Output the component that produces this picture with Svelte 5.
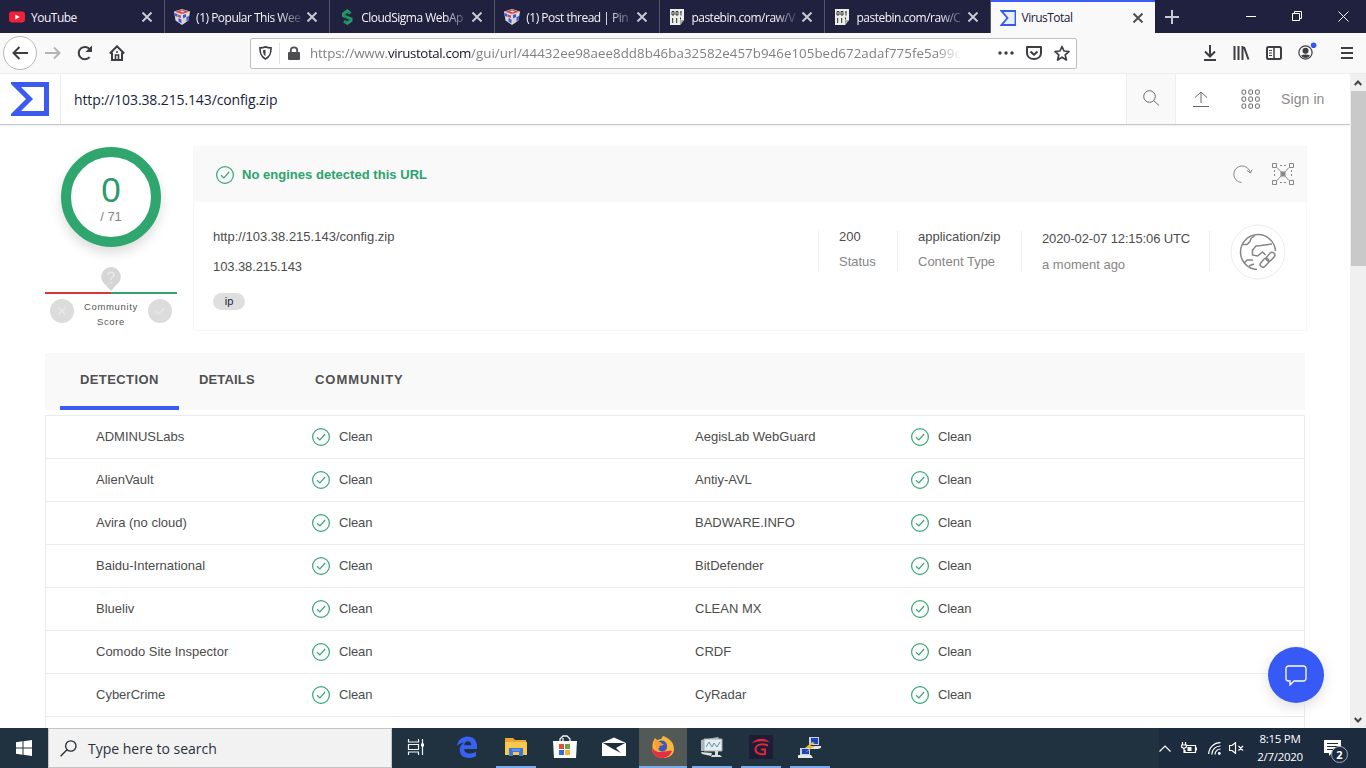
<script>
    const tabs = [
        { icon: "youtube", title: "YouTube" },
        { icon: "cube", title: "(1) Popular This Wee" },
        { icon: "sigma", title: "CloudSigma WebAp" },
        { icon: "cube", title: "(1) Post thread | Pin" },
        { icon: "paste", title: "pastebin.com/raw/V" },
        { icon: "paste", title: "pastebin.com/raw/C" },
        { icon: "vt", title: "VirusTotal", active: true },
    ];

    const engines = [
        ["ADMINUSLabs", "AegisLab WebGuard"],
        ["AlienVault", "Antiy-AVL"],
        ["Avira (no cloud)", "BADWARE.INFO"],
        ["Baidu-International", "BitDefender"],
        ["Blueliv", "CLEAN MX"],
        ["Comodo Site Inspector", "CRDF"],
        ["CyberCrime", "CyRadar"],
    ];

    const apps = [
        { name: "taskview" },
        { name: "edge" },
        { name: "explorer", open: true },
        { name: "store" },
        { name: "mail" },
        { name: "firefox", open: true, focused: true },
        { name: "monitor", open: true },
        { name: "garena", open: true },
        { name: "putty", open: true },
    ];
</script>

{#snippet check()}
    <svg class="check" width="18" height="18" viewBox="0 0 18 18">
        <circle cx="9" cy="9" r="8.4" />
        <path d="M5 9.2l2.9 2.8 5.2-6" />
    </svg>
{/snippet}

{#snippet favicon(name)}
    <svg class="favicon" width="16" height="16" viewBox="0 0 16 16">
        {#if name === "youtube"}
            <rect y="2.5" width="16" height="11" rx="3" fill="#f0223a" />
            <path d="M6.3 5.5v5l4.4-2.5z" fill="#fff" />
        {:else if name === "cube"}
            <path d="M0 2.5L8 0l8 2.5-1.5 9L8 16l-6.5-4.5z" fill="#dcd9dc" />
            <path d="M1 2.7L8 .5l7 2.2L8 5z" fill="#d64447" />
            <path d="M6 2.5l2-1 2.5 1-2 1z" fill="#f5eaea" />
            <path d="M.5 4l3 1v3l-2.500-1zM4.500 9l3 1.500v4l-3-2z" fill="#3c5fd0" />
            <path d="M9 6l3-1v3l-3 1.500zM12.500 8l2.500-1-.5 4-2 1.500z" fill="#3157d5" />
            <path d="M4 5.5l3 1v2.500l-3-1z" fill="#cf4a50" />
            <path d="M9 11l3-1.500v2.500l-3 2z" fill="#e6cbb6" />
        {:else if name === "sigma"}
            <path d="M11.500 4.500L8.300 2 4.500 4.800v2l7.500 3v2L8.300 14.300 5 12" fill="none" stroke="#249765" stroke-width="3" />
            <path d="M5 6l6-3M5.500 8l6 3M6 13l5-2.500" stroke="#1c6f54" stroke-width=".8" />
        {:else if name === "paste"}
            <path d="M1 0h14v11l-4 5H1z" fill="#eceeea" />
            <path d="M15 11h-4v5z" fill="#a8aaa7" />
            <path d="M3 2.500h2v3.500H3zM7 2.500h2v3.500H7zM12 2v4.500M11.300 3h1M3.700 9v5M3 10h1M7.700 9v5M7 10h1M11.500 8.500v2" fill="none" stroke="#333" />
        {:else}
            <path d="M1.500 1h14v14h-14l6-7z" fill="#e7efff" stroke="#3459ed" stroke-width="1.800" />
        {/if}
    </svg>
{/snippet}

{#snippet appIcon(name)}
    {#if name === "taskview"}
        <svg class="taskview" width="18" height="18" viewBox="0 0 18 18" fill="none" stroke="#f2f5f7" stroke-width="1.200">
            <path d="M1.500 1v3h10V1M1.500 17v-3h10v3M1.500 6.500h10v5h-10zM15.500 1v16" />
            <path d="M14 5.500h3v3h-3z" fill="#fff" stroke="none" />
        </svg>
    {:else if name === "edge"}
        <svg width="22" height="22" viewBox="0 0 22 22">
            <path d="M1 10C2 4 6 .5 11.500.5c6 0 9.500 4 9.500 10V13H8c.3 3 2.600 4.500 6 4.500 2.300 0 4.300-.6 6-1.700v4.400C18 21.300 15.500 22 12.700 22 7 22 3.700 18.700 3.700 13.800c0-3 1.500-5.500 4.300-7C5 7 2.700 8.200 1 10zM8.200 9.200h7.100c0-2.500-1.200-4-3.500-4-2 0-3.300 1.500-3.600 4z" fill="#3a62f2" />
        </svg>
    {:else if name === "explorer"}
        <svg width="22" height="20" viewBox="0 0 22 20">
            <path d="M0 1h8l2 2h11v15H0z" fill="#eba837" />
            <path d="M0 5h22v13H0z" fill="#fbc84e" />
            <path d="M4 19v-8h14v8h-4v-4H8v4z" fill="#3c76d8" />
            <path d="M7 13h8" stroke="#82b1f5" />
        </svg>
    {:else if name === "store"}
        <svg width="24" height="24" viewBox="0 0 24 24">
            <path d="M7 8V4l3-3h4l3 3v4M10 7V3" fill="none" stroke="#f5f7f8" stroke-width="1.300" />
            <path d="M0 6h24l-1 17H1z" fill="#fafafa" />
            <path d="M6 9h5v5H6z" fill="#e44c35" />
            <path d="M12 9h5v5h-5z" fill="#6aa644" />
            <path d="M6 15h5v5H6z" fill="#306ce0" />
            <path d="M12 15h5v5h-5z" fill="#f1b331" />
        </svg>
    {:else if name === "mail"}
        <svg width="24" height="20" viewBox="0 0 24 20">
            <path d="M0 6L12 .5 24 6v13H0z" fill="#fff" />
            <path d="M1 6h22L14 11l5 5-8-4z" fill="#1e2e3c" />
        </svg>
    {:else if name === "firefox"}
        <svg width="24" height="24" viewBox="0 0 24 24">
            <path d="M2 7l2-4 2 2 4-1 2-3c6 2 11 6 11 13 0 6-5 9-11 9S1 19 1 13z" fill="#f7b638" />
            <path d="M1 9c0 6 4 8 8 8 5 0 8-2 12-1-2 5-6 7-10 7C5 23 0 18 1 9z" fill="#e72f43" />
            <path d="M8 6c5-2 9 2 8 7-1 4-6 5-9 1l2-2-3-2z" fill="#3c58bd" />
            <path d="M4 5l5 2 4 3-5 1-2 3-2-4z" fill="#fa9c30" />
        </svg>
    {:else if name === "monitor"}
        <svg width="24" height="22" viewBox="0 0 24 22">
            <path d="M1 4l17-3 2 3v11H1z" fill="#adb6bb" />
            <path d="M4 3h18v12H4z" fill="#e8edf0" stroke="#a5afb4" />
            <path d="M6 11l3-5 3 5 2-4 3 4 3-5" fill="none" stroke="#5693b8" />
            <path d="M15 15v4h-3l-1 2h11l-2-2h-2v-4" fill="#d8dddf" />
            <path d="M1 16l11 1-1 3-9-2z" fill="#dce1e3" />
        </svg>
    {:else if name === "garena"}
        <svg width="24" height="24" viewBox="0 0 24 24">
            <path d="M0 0h24v24H0z" fill="#1d1d36" />
            <path d="M2.500 8.500C7 2.500 16 2 21 7.500 14 5.500 8 6 2.500 8.500z" fill="#db2b3a" />
            <path d="M19 10.500c-6-2.500-12-1-12.500 3.500-.3 4 4.500 6 9.500 5v-4.500h-4" fill="none" stroke="#db2b3a" stroke-width="2" />
        </svg>
    {:else}
        <svg width="24" height="24" viewBox="0 0 24 24">
            <path d="M11 2h10v8H11zM2 13h10v7H2z" fill="#c7d1df" />
            <path d="M13 3h7v6h-7zM4 14h7v5H4z" fill="#1e42b8" />
            <path d="M10 11h13v2l-3 1H10zM0 20h13l2 3H0z" fill="#e3e5e7" />
            <path d="M14 7l-7 6h5l-5 5 10-7h-5l5-3z" fill="#e1b84a" />
        </svg>
    {/if}
{/snippet}

<div class="screen">
    <div class="tabstrip">
        {#each tabs as tab}
            <div class="tab" class:active={tab.active}>
                {@render favicon(tab.icon)}
                <span class="tab-title" class:fade={!tab.active && tab.title.length > 10}>{tab.title}</span>
                <svg class="close" width="10" height="10" viewBox="0 0 10 10"><path d="M.5.5l9 9M9.500.5l-9 9" /></svg>
            </div>
        {/each}
        <svg class="new-tab" width="14" height="14" viewBox="0 0 14 14"><path d="M7 0v14M0 7h14" /></svg>
        <div class="window-buttons">
            <svg width="10" height="10" viewBox="0 0 10 10"><path d="M0 5.500h10" /></svg>
            <svg width="10" height="10" viewBox="0 0 10 10"><path d="M.5 2.500h7v7h-7zM2.500 2.500v-2h7v7h-2" /></svg>
            <svg width="11" height="11" viewBox="0 0 11 11"><path d="M.5.5l10 10M10.500.5l-10 10" /></svg>
        </div>
    </div>

    <div class="toolbar">
        <div class="back">
            <svg width="16" height="14" viewBox="0 0 16 14"><path d="M16 7H1.500M7.500 1l-6 6 6 6" /></svg>
        </div>
        <svg class="nav forward" width="16" height="14" viewBox="0 0 16 14"><path d="M0 7h14.500M9 1.500L14.500 7 9 12.500" /></svg>
        <svg class="nav reload" width="16" height="16" viewBox="0 0 16 16"><path d="M12.600 12.200A6.200 6.200 0 1 1 13 4.500" /><path d="M15 .5V7H8.500z" fill="#3d3d42" stroke="none" /></svg>
        <svg class="nav home" width="16" height="16" viewBox="0 0 16 16"><path d="M.8 8.500L8 1.300l7.200 7.200M3 7.500V15h10V7.500" /><path d="M6.500 15v-5h3v5M7 7h2" stroke-width="1.600" /></svg>
        <div class="urlbar">
            <svg class="shield" width="13" height="14" viewBox="0 0 13 14"><path d="M1 1.800c2.200 0 4-.3 5.500-.9 1.500.6 3.300.9 5.500.9 0 5.500-.8 9-5.500 11.200C1.800 10.800 1 7.300 1 1.800z" fill="none" stroke="#3f3f43" stroke-width="1.700" /><path d="M6.500 3.700v6.500c-1.800-1-2.500-3-2.500-6z" fill="#3f3f43" /></svg>
            <span class="identity-line"></span>
            <svg class="lock" width="12" height="14" viewBox="0 0 12 14"><path d="M2.800 7V4.500a3.200 3.200 0 0 1 6.400 0V7" fill="none" stroke="#4e4e50" stroke-width="1.800" /><rect y="6" width="12" height="8" rx="1" fill="#4e4e50" /></svg>
            <span class="url">https://www.<b>virustotal.com</b><i>/gui/url/44432ee98aee8dd8b46ba32582e457b946e105bed672adaf775fe5a99c</i></span>
            <svg class="page-actions" width="72" height="16" viewBox="0 0 72 16">
                <g fill="#3d3d42"><circle cx="2" cy="8" r="1.700" /><circle cx="8" cy="8" r="1.700" /><circle cx="14" cy="8" r="1.700" /></g>
                <path d="M29 2h14v6c0 3.500-3 6-7 6s-7-2.500-7-6zM32.500 6.500L36 9.800l3.500-3.300" fill="none" stroke="#3d3d42" stroke-width="2" stroke-linejoin="round" />
                <path d="M64 1.500l2 4.500 5 .5-3.800 3.300L68.400 15 64 12.200 59.600 15l1.200-5.200L57 6.500l5-.5z" fill="none" stroke="#3d3d42" stroke-width="1.700" stroke-linejoin="round" />
            </svg>
        </div>
        <div class="tools">
            <svg width="14" height="16" viewBox="0 0 14 16"><path d="M7 0v11M2 6.500l5 5 5-5M1 15h12" /></svg>
            <svg width="17" height="16" viewBox="0 0 17 16"><path d="M1.500 1v14M5.500 1v14M9.500 1v14M11 2l4.500 12.500" /></svg>
            <svg width="16" height="14" viewBox="0 0 16 14"><rect x="1" y="1" width="14" height="12" rx="1.500" /><path d="M8 1v12" stroke-width="1.500" /><path d="M3 4.500h3M3 7h3M3 9.500h3" stroke-width="1" /></svg>
            <svg class="account" width="19" height="19" viewBox="0 0 19 19"><circle cx="7.500" cy="10.500" r="6.600" stroke-width="1.200" /><circle cx="7.500" cy="8.700" r="3" fill="#3d3d42" stroke="none" /><path d="M3 13.500c2.500-1.500 6.500-1.500 9 0-2 3.300-7 3.300-9 0z" fill="#3d3d42" stroke="none" /><circle cx="15.600" cy="3.200" r="2.800" fill="#3456f3" stroke="none" /></svg>
            <svg class="menu" width="12" height="12" viewBox="0 0 12 12"><path d="M0 1h12M0 6h12M0 11h12" /></svg>
        </div>
    </div>

    <div class="viewport">
        <div class="page">
            <header>
                <div class="logo">
                    <svg width="38" height="34" viewBox="0 0 38 34"><path d="M4 2.500h31.500v29H4L18.500 17z" fill="none" stroke="#3a5af0" stroke-width="5" /></svg>
                </div>
                <div class="query">http://103.38.215.143/config.zip</div>
                <div class="search">
                    <svg width="16" height="16" viewBox="0 0 16 16"><circle cx="6.500" cy="6.500" r="5.800" /><path d="M10.800 10.800L16 15.500" /></svg>
                </div>
                <div class="user">
                    <svg width="16" height="16" viewBox="0 0 16 16"><path d="M8 12V1M2 6.500L8 1l6 5.500M0 15.500h16" /></svg>
                    <svg class="grid" width="19" height="20" viewBox="0 0 19 20">
                        {#each [0, 1, 2] as r}
                            {#each [0, 1, 2] as c}
                                <rect x={1 + c * 6.8} y={1 + r * 7} width="3.700" height="4.200" rx="1" />
                            {/each}
                        {/each}
                    </svg>
                    <span>Sign in</span>
                </div>
            </header>

            <main>
                <section class="summary">
                    <aside>
                        <div class="ring"><strong>0</strong><span>/ 71</span></div>
                        <svg class="pin" width="20" height="24" viewBox="0 0 20 24"><path d="M10 0a9.800 9.800 0 0 1 5 18.200L10 24l-5-5.800A9.800 9.800 0 0 1 10 0z" fill="#d6d6d6" /><path d="M7 8c0-4 6-3.500 6-.5 0 2.500-3 2.500-3 4.500v1M10 15v1.500" fill="none" stroke="#e9e9e9" stroke-width="1.500" /></svg>
                        <div class="scale"></div>
                        <div class="community">
                            <svg width="24" height="24" viewBox="0 0 24 24"><circle cx="12" cy="12" r="12" fill="#dcdcdc" /><path d="M8.500 8.500l7 7M15.500 8.500l-7 7" stroke="#e8e8e8" stroke-width="1.500" /></svg>
                            <span>Community<br />Score</span>
                            <svg width="24" height="24" viewBox="0 0 24 24"><circle cx="12" cy="12" r="12" fill="#dcdcdc" /><path d="M7.500 12l3 3 6-6" fill="none" stroke="#e8e8e8" stroke-width="1.500" /></svg>
                        </div>
                    </aside>
                    <article>
                        <div class="verdict">
                            {@render check()}
                            <strong>No engines detected this URL</strong>
                            <svg class="rescan" width="20" height="20" viewBox="0 0 20 20"><path d="M8.500 18.500A8.300 8.300 0 1 1 17.300 9M14 6.500l3.500 2.500 1.500-3.500" /></svg>
                            <svg class="graph" width="22" height="24" viewBox="0 0 22 24"><path d="M.5 1.500h4v4h-4zM17.500 1.500h4v4h-4zM.5 18.500h4v4h-4zM17.500 18.500h4v4h-4zM5 5.500l12 13M17 5.500l-12 13" /><path d="M8 3.500h6M8 20.500h6M2.500 8v8M19.500 8v8" stroke-dasharray="2 2" /><rect x="8.500" y="9.500" width="5" height="5" fill="#888" stroke="none" /></svg>
                        </div>
                        <div class="facts">
                            <div class="target">
                                <p>http://103.38.215.143/config.zip</p>
                                <p class="address">103.38.215.143</p>
                                <span class="tag">ip</span>
                            </div>
                            <div class="fact status">200<small>Status</small></div>
                            <div class="fact type">application/zip<small>Content Type</small></div>
                            <div class="fact date"><span>2020-02-07 12:15:06 UTC</span><small>a moment ago</small></div>
                            <div class="fact globe">
                                <svg width="56" height="56" viewBox="0 0 56 56" fill="none" stroke="#858585" stroke-width="1.500">
                                    <circle cx="28" cy="28" r="27" stroke="#ececec" stroke-width="1" />
                                    <path d="M27 45.500A17.500 17.500 0 1 1 45.500 27" />
                                    <path d="M13 20.500h4l3-3 1-3 4-3M42 20l-11 1.500-5 .5-3.500 4v5l5 1 5-4 3 3M14 39.500l3-3.500h6M19 42l5-2" />
                                    <rect x="35.500" y="30.500" width="10" height="5.500" rx="2.700" transform="rotate(-48 40 33)" />
                                    <rect x="29.500" y="36.500" width="10" height="5.500" rx="2.700" transform="rotate(-48 34 39)" />
                                </svg>
                            </div>
                        </div>
                    </article>
                </section>

                <nav>
                    <span class="selected">DETECTION</span>
                    <span class="details">DETAILS</span>
                    <span class="comm">COMMUNITY</span>
                </nav>

                <div class="results">
                    {#each engines as row}
                        <div class="row">
                            {#each row as engine}
                                <div class="engine">
                                    <span>{engine}</span>
                                    {@render check()}
                                    <em>Clean</em>
                                </div>
                            {/each}
                        </div>
                    {/each}
                </div>
            </main>
        </div>
        <div class="scrollbar">
            <svg width="8" height="6" viewBox="0 0 8 6"><path d="M.7 5L4 1.500 7.300 5" /></svg>
            <div class="thumb"></div>
            <svg class="down" width="8" height="6" viewBox="0 0 8 6"><path d="M.7 1L4 4.500 7.300 1" /></svg>
        </div>
        <div class="chat">
            <svg width="22" height="21" viewBox="0 0 22 21"><path d="M3.500 1h15A2.500 2.500 0 0 1 21 3.500v10a2.500 2.500 0 0 1-2.500 2.500H9l-4 4v-4H3.500A2.500 2.500 0 0 1 1 13.500v-10A2.500 2.500 0 0 1 3.500 1z" /></svg>
        </div>
    </div>

    <footer>
        <div class="start">
            <svg width="16" height="16" viewBox="0 0 16 16"><path d="M0 2.300L6.500 1.300V7.500H0zM7.500 1.200L16 0v7.500H7.500zM0 8.500h6.500v6.200L0 13.700zM7.500 8.500H16V16l-8.500-1.200z" fill="#fff" /></svg>
        </div>
        <div class="taskbar-search">
            <svg width="17" height="17" viewBox="0 0 17 17"><circle cx="10.800" cy="6" r="5.200" /><path d="M7 9.800L.6 16.300" /></svg>
            Type here to search
        </div>
        <div class="apps">
            {#each apps as app}
                <div class="app" class:open={app.open} class:focused={app.focused}>{@render appIcon(app.name)}</div>
            {/each}
        </div>
        <div class="tray">
            <svg width="12" height="7" viewBox="0 0 12 7"><path d="M.5 6.500L6 1l5.500 5.500" /></svg>
            <svg class="battery" width="16" height="12" viewBox="0 0 16 12"><path d="M5 3.500h9.500v7H4V8M15.500 5.500v3M1.500 0v3M4.500 0v3M.5 3h5v2L3 6.500.5 5zM3 6v5" /><path d="M6.500 5h4v4h-4z" fill="#fff" stroke="none" /></svg>
            <svg class="wifi" width="13" height="13" viewBox="0 0 13 13"><path d="M.7 12A11.500 11.500 0 0 1 12.500.7M3.800 12.500A8.500 8.500 0 0 1 12.500 4M7 12.500A5.500 5.500 0 0 1 12.500 7" /><circle cx="11.300" cy="11.500" r="1.400" fill="#fff" stroke="none" /></svg>
            <svg class="sound" width="15" height="12" viewBox="0 0 15 12"><path d="M.5 3.500h2.500L6.500.7v10.600L3 8.500H.5zM9.500 4l4.500 4.500M14 4L9.500 8.500" /></svg>
            <div class="clock">8:15 PM<br />2/7/2020</div>
            <div class="notice">
                <svg width="17" height="16" viewBox="0 0 17 16"><path d="M0 0h17v13H8l-3 3v-3H0z" fill="#fff" stroke="none" /><path d="M3 3.500h11M3 6.500h11M3 9.500h7" stroke="#1d2b3f" /></svg>
                <span>2</span>
            </div>
        </div>
    </footer>
</div>

<style>
    :global(body) {
        overflow: hidden;
    }
    .screen {
        display: flex;
        flex-direction: column;
        width: 1366px;
        height: 768px;
        background: #fff;
        font-family: "Open Sans", "Noto Sans", sans-serif;
    }
    svg {
        display: block;
        flex: none;
    }

    /* browser tabs */
    .tabstrip {
        display: flex;
        align-items: center;
        height: 33px;
        background: #20203f;
        color: #f4f4f8;
    }
    .tab {
        display: flex;
        align-items: center;
        box-sizing: border-box;
        width: 165.1px;
        height: 33px;
        padding: 1px 12px 0 9px;
        border-right: 1px solid #56566d;
        font-size: 12px;
    }
    .tab-title {
        flex: 1;
        min-width: 0;
        margin: 0 2px 0 6px;
        white-space: nowrap;
        letter-spacing: -0.5px;
    }
    .fade {
        mask-image: linear-gradient(90deg, #000 76%, transparent 100%);
    }
    .tab.active {
        width: 164.4px;
        border-top: 2px solid #3b5cf5;
        border-right: none;
        padding-top: 0;
        background: #f9f9fa;
        color: #20203a;
    }
    .close {
        fill: none;
        stroke: #c9c9d1;
        stroke-width: 2;
    }
    .active .close {
        stroke: #505056;
    }
    .new-tab {
        margin-left: 10px;
        stroke: #cacad4;
        stroke-width: 2;
    }
    .window-buttons {
        display: flex;
        gap: 36px;
        margin-left: auto;
        padding-right: 17px;
        fill: none;
        stroke: #fff;
    }

    /* navigation */
    .toolbar {
        display: flex;
        align-items: center;
        box-sizing: border-box;
        height: 41px;
        border-bottom: 1px solid #ececec;
        background: #f9f9fa;
        fill: none;
        stroke: #3d3d42;
        stroke-width: 2;
    }
    .back {
        display: grid;
        place-items: center;
        box-sizing: border-box;
        width: 34px;
        height: 34px;
        margin-left: 3px;
        border: 1px solid #b8b8b8;
        border-radius: 50%;
        background: #fff;
    }
    .forward {
        margin-left: 8px;
        stroke: #b4b4b6;
    }
    .reload {
        margin-left: 16px;
    }
    .home {
        margin-left: 16px;
    }
    .urlbar {
        display: flex;
        align-items: center;
        box-sizing: border-box;
        width: 827px;
        height: 31px;
        margin-left: 125px;
        padding: 0 6px 0 8px;
        border: 1px solid #c0c0c0;
        border-radius: 2px;
        background: #fff;
        stroke: none;
    }
    .identity-line {
        width: 1px;
        height: 21px;
        margin: 0 8px 0 7px;
        background: #e2e2e2;
    }
    .url {
        width: 652px;
        margin-left: 10px;
        white-space: nowrap;
        color: #808083;
        font-size: 13.3px;
        letter-spacing: -0.15px;
        mask-image: linear-gradient(90deg, #000 96%, transparent);
    }
    .url b {
        color: #15152b;
        font-weight: 400;
        letter-spacing: -0.38px;
    }
    .url i {
        font-style: normal;
        letter-spacing: 0.06px;
    }
    .page-actions {
        margin-left: auto;
    }
    .tools {
        display: flex;
        align-items: center;
        gap: 16px;
        margin-left: auto;
        padding-right: 13px;
    }
    .account {
        margin-top: -4px;
    }
    .menu {
        margin-left: 8px;
    }

    .viewport {
        position: relative;
        display: flex;
        height: 654px;
        overflow: hidden;
        font: 13px "Liberation Sans", Arial, sans-serif;
        color: #4c4c4c;
    }
    .page {
        width: 1350px;
    }
    header {
        display: flex;
        box-sizing: border-box;
        height: 51px;
        border-bottom: 1px solid #c6c6c6;
        box-shadow: 0 1px 3px #eee;
    }
    .logo {
        display: grid;
        place-items: center;
        width: 60px;
        border-right: 1px solid #ebebeb;
    }
    .query {
        flex: 1;
        padding-left: 13px;
        color: #17243b;
        font: 14px/51px "Open Sans", sans-serif;
        letter-spacing: -0.12px;
    }
    .search {
        display: grid;
        place-items: center;
        width: 48px;
        padding-bottom: 2px;
        border: solid #eee;
        border-width: 0 1px;
        background: #f9f9f9;
        fill: none;
        stroke: #686868;
    }
    .user {
        display: flex;
        align-items: center;
        width: 157px;
        padding-left: 17px;
        fill: none;
        stroke: #686868;
    }
    .grid {
        margin-left: 32px;
    }
    .user span {
        margin-left: 21px;
        color: #8a8a8a;
        font-size: 14px;
        letter-spacing: 0.1px;
    }

    main {
        width: 1260px;
        margin: 21px 0 0 45px;
    }
    .summary {
        display: flex;
        height: 207px;
    }
    aside {
        display: flex;
        flex: none;
        flex-direction: column;
        align-items: center;
        width: 132px;
        margin-right: 16px;
    }
    .ring {
        display: flex;
        flex-direction: column;
        align-items: center;
        box-sizing: border-box;
        width: 100px;
        height: 100px;
        margin-top: 1px;
        padding-top: 15px;
        border: 10px solid #2ea66e;
        border-radius: 50%;
        box-shadow: 0 6px 12px #ddd;
        color: #858585;
    }
    .ring strong {
        color: #2b9b68;
        font-size: 35px;
        font-weight: 400;
        line-height: 36px;
    }
    .ring span {
        line-height: 18px;
    }
    .pin {
        margin-top: 20px;
    }
    .scale {
        width: 132px;
        height: 2px;
        margin-top: 1px;
        background: linear-gradient(90deg, #d93643 50%, #36a16f 50%);
    }
    .community {
        display: flex;
        justify-content: space-between;
        width: 122px;
        margin-top: 5px;
        color: #555;
        font-size: 9.5px;
        line-height: 15px;
        letter-spacing: 0.65px;
        text-align: center;
    }
    article {
        box-sizing: border-box;
        flex: none;
        width: 1114px;
        height: 185px;
        border: 1px solid #f7f7f7;
    }
    .verdict {
        display: flex;
        align-items: center;
        height: 55px;
        padding: 0 12px 0 22px;
        background: #f9f9f9;
        fill: none;
        stroke: #888;
    }
    .verdict strong {
        flex: 1;
        margin-left: 8px;
        color: #2ba36d;
        letter-spacing: 0.03px;
    }
    .rescan {
        margin-top: -2px;
    }
    .graph {
        margin: -2px 0 0 19px;
    }
    .check {
        fill: none;
        stroke: #36a678;
        stroke-width: 1.2;
    }
    .facts {
        display: flex;
        padding: 29px 0 0 19px;
    }
    .target {
        flex: 1;
    }
    .target p {
        height: 15px;
        margin: -2px 0 17px;
    }
    .address {
        letter-spacing: -0.1px;
    }
    .tag {
        display: block;
        width: 32px;
        margin-top: 19px;
        border-radius: 9px;
        background: #dfdfdf;
        color: #17243b;
        font-size: 11px;
        line-height: 17px;
        text-align: center;
    }
    .fact {
        box-sizing: border-box;
        height: 40px;
        border-left: 1px solid #eee;
        padding-left: 20px;
        line-height: 12px;
        white-space: nowrap;
    }
    .fact small {
        display: block;
        margin-top: 13px;
        color: #858585;
        font-size: 13px;
    }
    .status {
        width: 79px;
    }
    .type {
        width: 124px;
    }
    .date {
        width: 188px;
        padding-top: 2px;
    }
    .date span {
        letter-spacing: -0.13px;
    }
    .date small {
        margin-top: 14px;
    }
    .globe {
        width: 97px;
    }
    .globe svg {
        margin-top: -7px;
    }

    nav {
        display: flex;
        height: 57px;
        padding-left: 15px;
        background: #f9f9f9;
        color: #505050;
        font-weight: 700;
        line-height: 54px;
        letter-spacing: 0.4px;
    }
    nav span {
        box-sizing: border-box;
    }
    .selected {
        width: 119px;
        padding-left: 20px;
        border-bottom: 4px solid #3b5cf3;
    }
    .details {
        width: 116px;
        padding-left: 20px;
        letter-spacing: 0.15px;
    }
    .comm {
        padding-left: 20px;
        letter-spacing: 0.95px;
    }
    .results {
        height: 320px;
        margin-top: 5px;
        border: 1px solid #eaeaea;
    }
    .row {
        display: flex;
        height: 42px;
        border-bottom: 1px solid #eaeaea;
    }
    .engine {
        display: flex;
        align-items: center;
        width: 549px;
        padding-left: 50px;
    }
    .engine span {
        width: 216px;
        padding-bottom: 2px;
    }
    .engine em {
        margin-left: 9px;
        padding-bottom: 2px;
        font-style: normal;
        letter-spacing: -0.15px;
    }

    .scrollbar {
        display: flex;
        flex-direction: column;
        align-items: center;
        width: 16px;
        padding-top: 6px;
        background: #f0f0f0;
        fill: none;
        stroke: #444;
        stroke-width: 2;
    }
    .thumb {
        width: 15px;
        height: 175px;
        margin-top: 5px;
        background: #c9c9c9;
    }
    .down {
        margin: auto 0 5px;
    }
    /* floats over the results */
    .chat {
        position: absolute;
        top: 573px;
        left: 1268px;
        display: grid;
        place-items: center;
        width: 56px;
        height: 56px;
        border-radius: 50%;
        background: #375af7;
        box-shadow: 0 4px 14px #ddd;
        fill: none;
        stroke: #fff;
        stroke-width: 1.3;
    }

    /* taskbar */
    footer {
        display: flex;
        height: 40px;
        background: #203240;
        color: #fff;
    }
    .start {
        display: grid;
        place-items: center;
        width: 48px;
    }
    .taskbar-search {
        display: flex;
        align-items: center;
        gap: 11px;
        box-sizing: border-box;
        width: 344px;
        padding-left: 11px;
        border: 1px solid #c4c4c4;
        background: #f2f2f2;
        color: #28323e;
        font-size: 14px;
        fill: none;
        stroke: #242b31;
        stroke-width: 1.3;
    }
    .apps {
        display: flex;
        gap: 1px;
        padding-left: 2px;
    }
    .app {
        display: grid;
        place-items: center;
        box-sizing: border-box;
        width: 48px;
        border-bottom: 2px solid transparent;
    }
    .taskview {
        margin-left: -4px;
    }
    .open {
        width: 40px;
        margin: 0 4px;
        border-color: #79ace9;
    }
    .focused {
        width: 48px;
        margin: 0;
        background: #535957;
    }
    .tray {
        display: flex;
        align-items: center;
        margin-left: auto;
        background: #1d2b3f;
        fill: none;
        stroke: #fff;
        stroke-width: 1.2;
    }
    .battery {
        margin-left: 10px;
    }
    .wifi {
        margin-left: 11px;
    }
    .sound {
        margin-left: 8px;
    }
    .clock {
        width: 62px;
        margin-left: 5px;
        font-size: 11.5px;
        line-height: 18px;
        letter-spacing: -0.3px;
        text-align: center;
    }
    .notice {
        position: relative;
        width: 42px;
        padding-left: 13px;
    }
    .notice span {
        position: absolute;
        top: 6px;
        left: 20px;
        width: 15px;
        height: 15px;
        border: 1px solid #a4adb5;
        border-radius: 50%;
        background: #1d2b3f;
        font: 700 11px/15px "Open Sans", sans-serif;
        text-align: center;
    }
</style>
